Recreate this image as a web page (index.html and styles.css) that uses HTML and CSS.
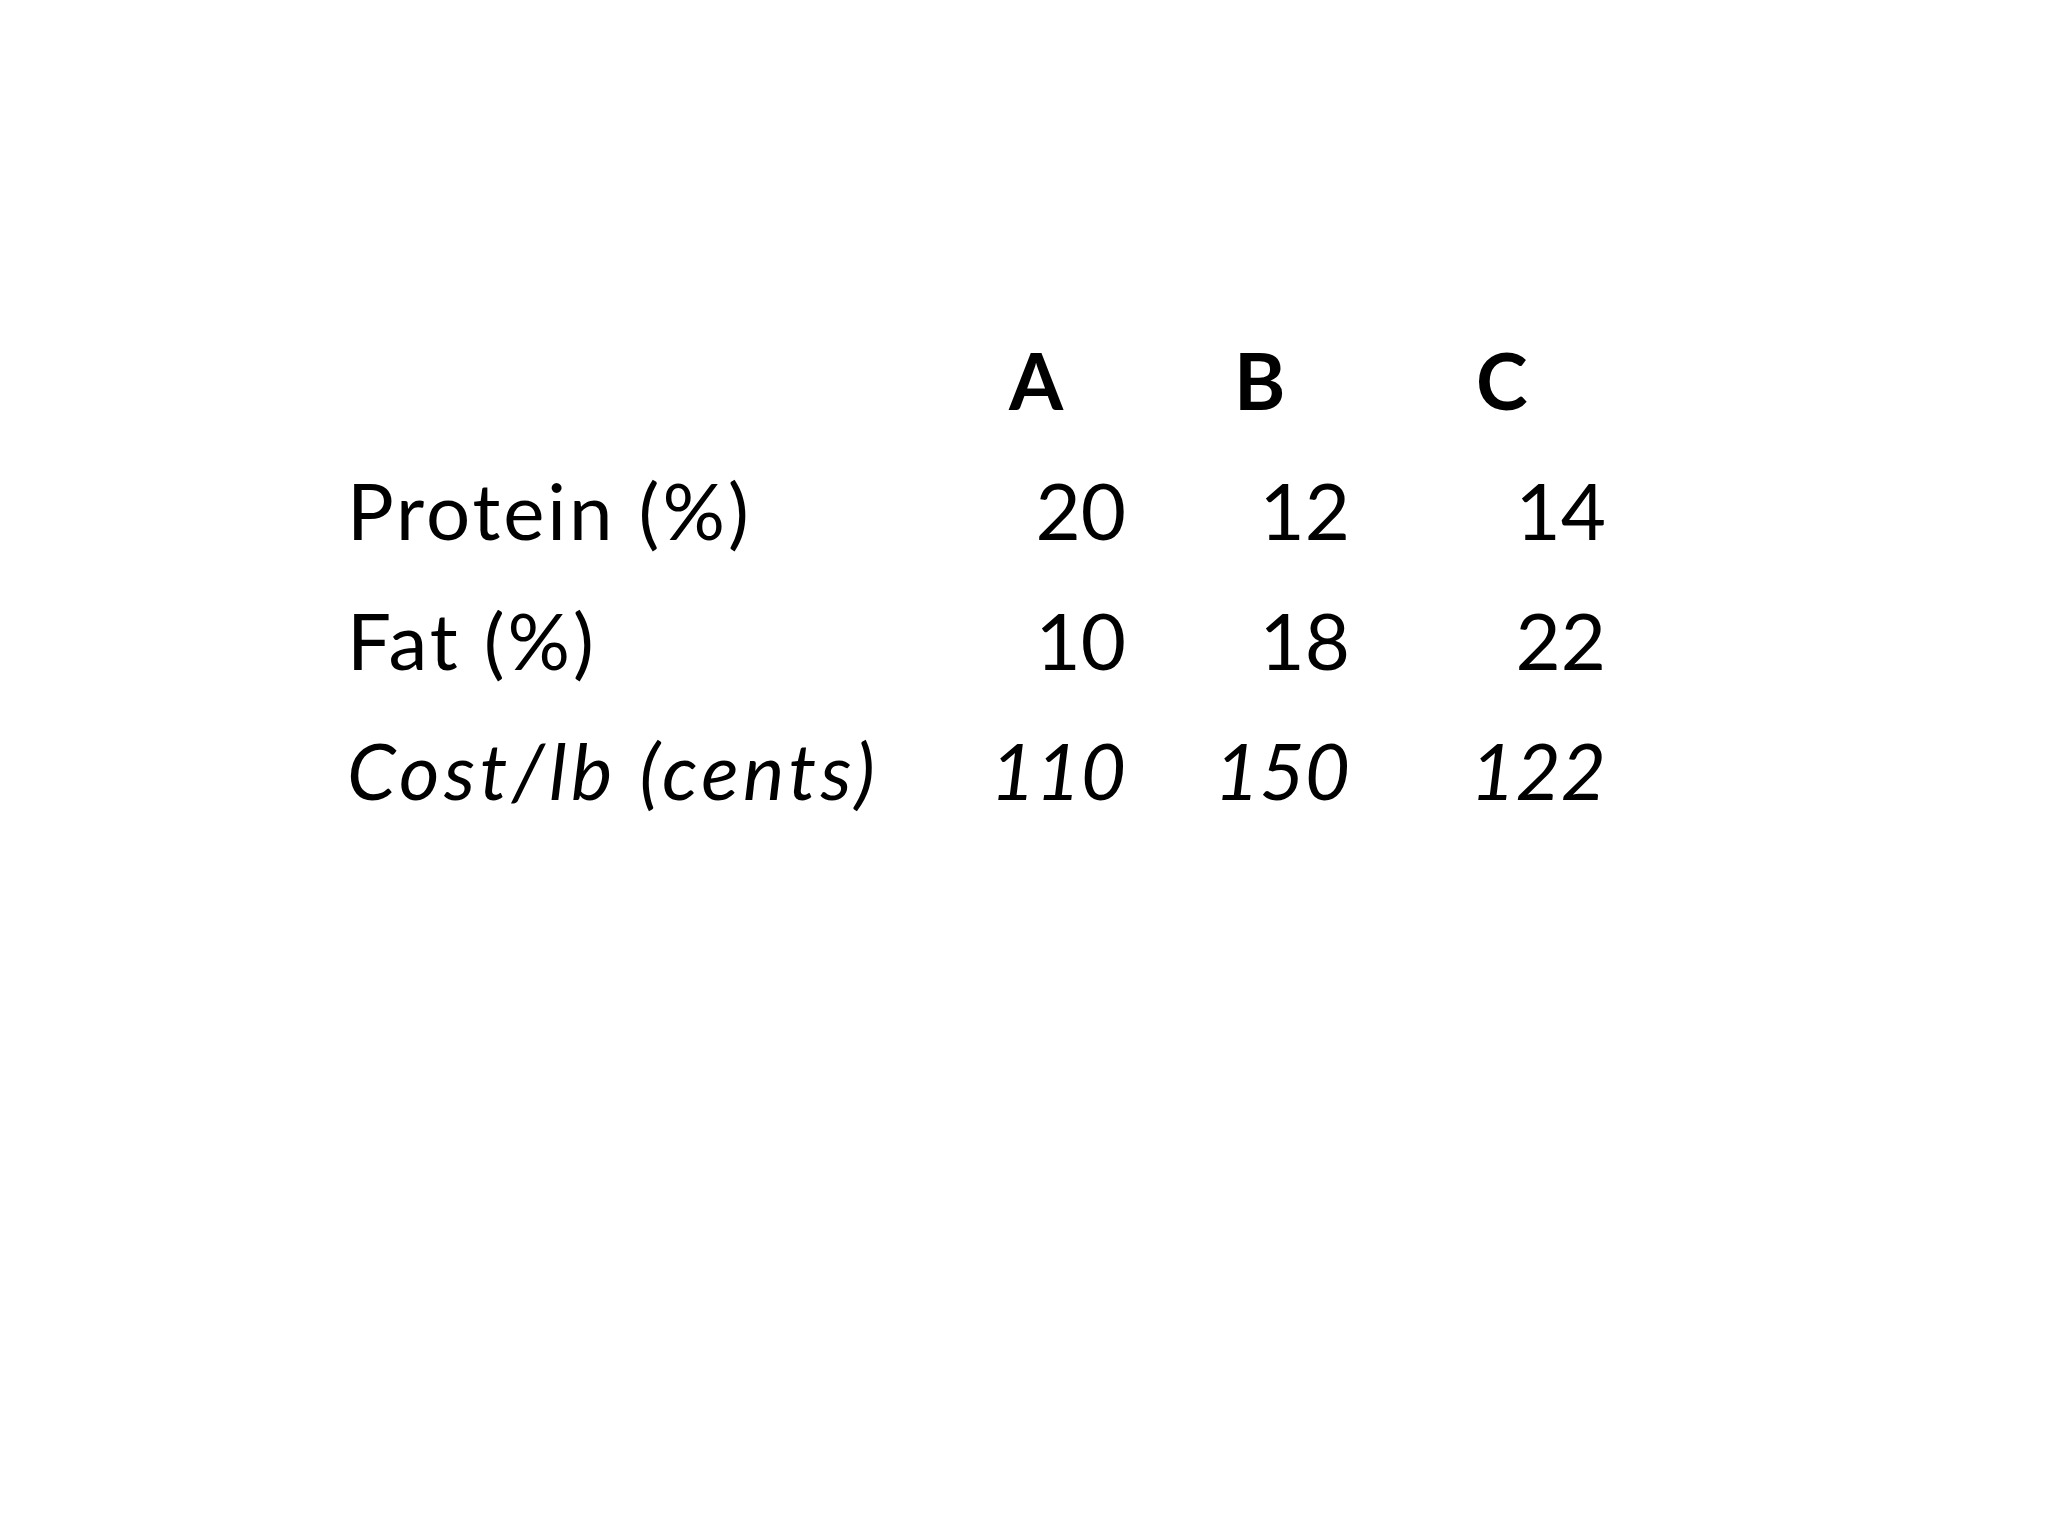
FILE: index.html
```html
<!DOCTYPE html>
<html lang="en">
<head>
<meta charset="utf-8">
<title>Protein, fat and cost</title>
<link rel="stylesheet" href="styles.css">
</head>
<body>
<main class="slide">
  <div class="table">
    <div class="cell label"></div>
    <div class="cell head col-a">A</div>
    <div class="cell head col-b">B</div>
    <div class="cell head col-c">C</div>

    <div class="cell label">Protein (%)</div>
    <div class="cell num col-a">20</div>
    <div class="cell num col-b">12</div>
    <div class="cell num col-c">14</div>

    <div class="cell label">Fat (%)</div>
    <div class="cell num col-a">10</div>
    <div class="cell num col-b">18</div>
    <div class="cell num col-c">22</div>

    <div class="cell label italic">Cost/lb (cents)</div>
    <div class="cell num italic col-a">110</div>
    <div class="cell num italic col-b">150</div>
    <div class="cell num italic col-c">122</div>
  </div>
</main>
</body>
</html>
```

FILE: styles.css
```css
html, body {
  margin: 0;
  padding: 0;
  background: #ffffff;
}

.slide {
  width: 2048px;
  height: 1536px;
  box-sizing: border-box;
  padding: 315px 0 0 347px;
  font-family: Lato, "Liberation Sans", sans-serif;
  color: #000000;
}

/* columns end at the right edge of each number column */
.table {
  display: grid;
  grid-template-columns: 560px 219px 224px 256px;
  grid-auto-rows: 130px;
  font-size: 78px;
  line-height: 130px;
}

.cell {
  white-space: nowrap;
}

.label {
  letter-spacing: 3px;
}

.label.italic {
  letter-spacing: 4.5px;
}

.head {
  font-weight: 700;
  text-align: left;
}

.head.col-a { padding-left: 102px; }
.head.col-b { padding-left: 108px; }
.head.col-c { padding-left: 126px; }

.num {
  text-align: right;
  padding-right: 0;
}

.num.italic.col-a { padding-right: 0; }
.num.italic.col-b { padding-right: 0; }
.num.italic.col-c { padding-right: 0; }

.italic {
  font-style: italic;
}
```
